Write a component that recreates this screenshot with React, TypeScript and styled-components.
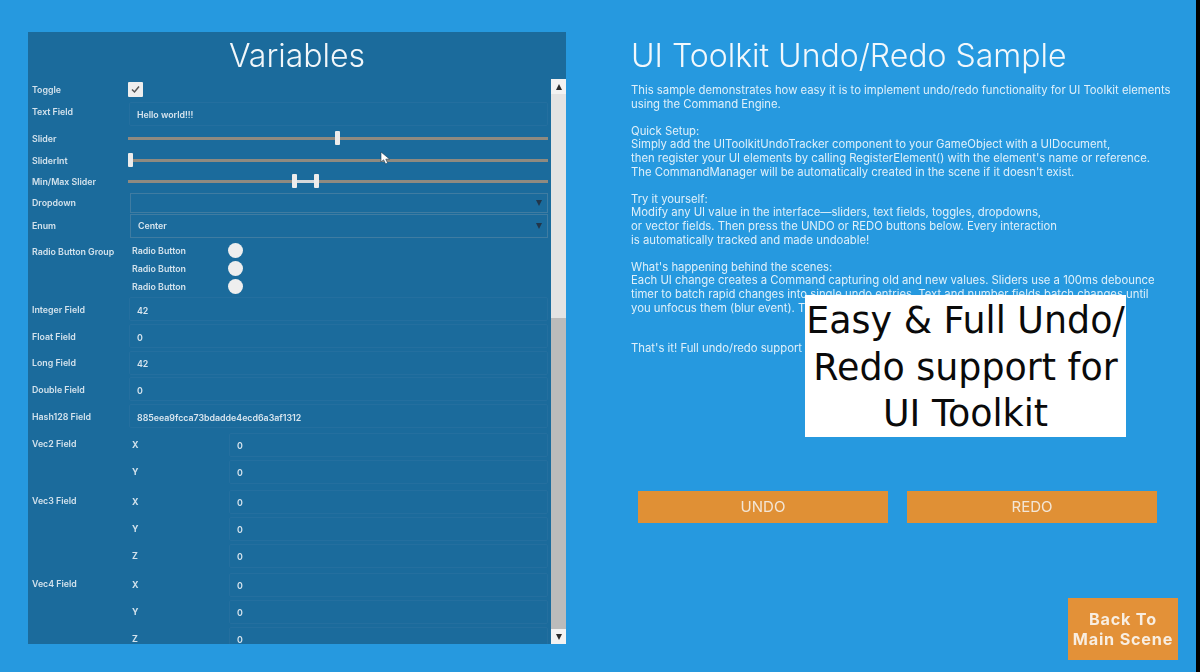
import * as React from 'react';
import styled, { createGlobalStyle } from 'styled-components';

const GlobalStyle = createGlobalStyle`
  html, body {
    margin: 0;
    padding: 0;
    background: #000;
  }
  body {
    font-family: Inter, "Liberation Sans", sans-serif;
    overflow: hidden;
  }
`;

const Screen = styled.div`
  position: relative;
  width: 1196px;
  height: 672px;
  background: #2699df;
  display: flex;
  overflow: hidden;
`;

const LeftPanel = styled.section`
  margin: 32px 0 28px 28px;
  width: 538px;
  background: #1b6b9c;
  display: flex;
  flex-direction: column;
  filter: blur(0.55px);
`;

const PanelTitle = styled.h1`
  margin: 0;
  height: 47px;
  line-height: 47px;
  text-align: center;
  font-size: 32px;
  font-weight: 300;
  color: #f2f7fa;
`;

const ScrollArea = styled.div`
  flex: 1;
  display: flex;
  min-height: 0;
`;

const Fields = styled.div`
  flex: 1;
  overflow: hidden;
  padding: 0 3px 0 4px;
`;

const Row = styled.div<{ $h: number; $top?: boolean }>`
  height: ${p => p.$h}px;
  display: flex;
  align-items: ${p => (p.$top ? 'flex-start' : 'center')};
`;

const Label = styled.div<{ $raise?: number }>`
  width: 96px;
  flex: none;
  margin-bottom: ${p => p.$raise || 0}px;
  font-size: 8.8px;
  font-weight: 600;
  color: #d3e2ec;
  white-space: nowrap;
`;

const RadioLabel = styled(Label)`
  padding-top: 8px;
`;

const Checkbox = styled.div`
  width: 15px;
  height: 15px;
  background: #eeeeee;
  border-radius: 1px;
  display: flex;
  align-items: center;
  justify-content: center;
`;

const InputBox = styled.div`
  flex: 1;
  height: 24px;
  margin-left: 1px;
  padding: 2px 6px 0 7px;
  display: flex;
  align-items: center;
  box-sizing: border-box;
  border: 1px solid #246f9f;
  border-radius: 2px;
  font-size: 8.8px;
  font-weight: 600;
  color: #d8e5ee;
  white-space: nowrap;
`;

const Track = styled.div`
  position: relative;
  flex: 1;
  height: 3px;
  background: #8f8a80;
`;

const Handle = styled.div<{ $left: number }>`
  position: absolute;
  left: ${p => p.$left}px;
  top: -6px;
  width: 5px;
  height: 14px;
  background: #ececec;
  border-radius: 1px;
`;

const RangeFill = styled.div<{ $left: number; $width: number }>`
  position: absolute;
  left: ${p => p.$left}px;
  width: ${p => p.$width}px;
  top: 0;
  height: 3px;
  background: #d5d8da;
`;

const Select = styled.div<{ $h: number }>`
  flex: 1;
  height: ${p => p.$h}px;
  margin-left: 2px;
  padding: 0 7px;
  box-sizing: border-box;
  border: 1px solid #3f7ca2;
  display: flex;
  align-items: center;
  justify-content: space-between;
  font-size: 8.8px;
  font-weight: 600;
  color: #d8e5ee;
`;

const Caret = styled.span`
  width: 0;
  height: 0;
  margin-right: -2px;
  border-left: 3px solid transparent;
  border-right: 3px solid transparent;
  border-top: 6px solid #22364a;
`;

const RadioGroup = styled.div`
  display: flex;
  flex-direction: column;
  margin-left: 4px;
  padding-top: 3px;
`;

const RadioRow = styled.div`
  height: 18px;
  display: flex;
  align-items: center;
  font-size: 8.8px;
  font-weight: 600;
  color: #d3e2ec;
`;

const RadioText = styled.span`
  width: 96px;
`;

const RadioDot = styled.span`
  width: 15px;
  height: 15px;
  border-radius: 50%;
  background: #eeeeee;
`;

const VecGroup = styled.div<{ $top: number }>`
  display: flex;
  margin-top: ${p => p.$top}px;
`;

const VecLabel = styled(Label)`
  padding-top: 7px;
  height: 12px;
`;

const VecRows = styled.div`
  flex: 1;
  display: flex;
  flex-direction: column;
`;

const VecRow = styled.div`
  height: 27px;
  display: flex;
  align-items: center;
  padding-left: 4px;
`;

const AxisName = styled.span`
  width: 96px;
  flex: none;
  font-size: 8.8px;
  font-weight: 700;
  color: #d3e2ec;
`;

const Scrollbar = styled.div`
  width: 15px;
  flex: none;
  display: flex;
  flex-direction: column;
  background: #bbbbbb;
`;

const ScrollButton = styled.div`
  height: 15px;
  flex: none;
  background: #f2f2f2;
  display: flex;
  align-items: center;
  justify-content: center;
`;

const ScrollThumb = styled.div`
  height: 224px;
  background: #e3e3e3;
`;

const ScrollRest = styled.div`
  flex: 1;
`;

const UpArrow = styled.span`
  width: 0;
  height: 0;
  border-left: 3px solid transparent;
  border-right: 3px solid transparent;
  border-bottom: 6px solid #2a2a2a;
`;

const DownArrow = styled.span`
  width: 0;
  height: 0;
  border-left: 3px solid transparent;
  border-right: 3px solid transparent;
  border-top: 6px solid #2a2a2a;
`;

const RightColumn = styled.section`
  flex: 1;
  padding: 32px 18px 12px 65px;
  display: flex;
  flex-direction: column;
  filter: blur(0.55px);
`;

const MainTitle = styled.h2`
  margin: 0;
  height: 47px;
  line-height: 47px;
  font-size: 32px;
  font-weight: 300;
  color: #f2f8fc;
  white-space: nowrap;
`;

const Description = styled.p`
  margin: 5px 0 0;
  font-size: 11.3px;
  line-height: 13.6px;
  font-weight: 400;
  color: #dff0fa;
  white-space: pre;
`;

const ButtonRow = styled.div`
  display: flex;
  gap: 19px;
  margin: 135px 0 0 7px;
`;

const ActionButton = styled.div`
  width: 250px;
  height: 32px;
  background: #e09035;
  color: #f3e6d6;
  font-size: 15px;
  display: flex;
  align-items: center;
  justify-content: center;
`;

const BackButton = styled.div`
  align-self: flex-end;
  margin-top: auto;
  width: 110px;
  height: 62px;
  background: #e39138;
  color: #f8eee2;
  font-size: 16.2px;
  line-height: 20px;
  font-weight: 700;
  letter-spacing: 0.8px;
  text-align: center;
  display: flex;
  align-items: center;
  justify-content: center;
`;

const CaptionCard = styled.div`
  position: absolute;
  left: 805px;
  top: 295px;
  width: 321px;
  height: 142px;
  padding-top: 3px;
  box-sizing: border-box;
  background: #fff;
  color: #0a0a0a;
  font-family: "DejaVu Sans", Verdana, sans-serif;
  font-size: 36.4px;
  line-height: 46.5px;
  text-align: center;
  white-space: nowrap;
`;

const Pointer = styled.svg`
  position: absolute;
  left: 380px;
  top: 151px;
  width: 11px;
  height: 14px;
`;

const description = `This sample demonstrates how easy it is to implement undo/redo functionality for UI Toolkit elements
using the Command Engine.

Quick Setup:
Simply add the UIToolkitUndoTracker component to your GameObject with a UIDocument,
then register your UI elements by calling RegisterElement() with the element's name or reference.
The CommandManager will be automatically created in the scene if it doesn't exist.

Try it yourself:
Modify any UI value in the interface—sliders, text fields, toggles, dropdowns,
or vector fields. Then press the UNDO or REDO buttons below. Every interaction
is automatically tracked and made undoable!

What's happening behind the scenes:
Each UI change creates a Command capturing old and new values. Sliders use a 100ms debounce
timer to batch rapid changes into single undo entries. Text and number fields batch changes until
you unfocus them (blur event). The


That's it! Full undo/redo support`;

const numberFields = [
  { label: 'Integer Field', value: '42' },
  { label: 'Float Field', value: '0' },
  { label: 'Long Field', value: '42' },
  { label: 'Double Field', value: '0' },
  { label: 'Hash128 Field', value: '885eea9fcca73bdadde4ecd6a3af1312' },
];

const vectors = [
  { label: 'Vec2 Field', axes: ['X', 'Y'], top: 2 },
  { label: 'Vec3 Field', axes: ['X', 'Y', 'Z'], top: 3 },
  { label: 'Vec4 Field', axes: ['X', 'Y', 'Z'], top: 2 },
];

export default function App() {
  return (
    <Screen>
      <GlobalStyle />
      <LeftPanel>
        <PanelTitle>Variables</PanelTitle>
        <ScrollArea>
          <Fields>
            <Row $h={21}>
              <Label>Toggle</Label>
              <Checkbox>
                <svg width="11" height="11" viewBox="0 0 11 11">
                  <path d="M2 5.5 L4.5 8 L9 2.5" fill="none" stroke="#555" strokeWidth="1.5" />
                </svg>
              </Checkbox>
            </Row>
            <Row $h={27}>
              <Label $raise={4}>Text Field</Label>
              <InputBox>Hello world!!!</InputBox>
            </Row>
            <Row $h={22}>
              <Label>Slider</Label>
              <Track><Handle $left={207} /></Track>
            </Row>
            <Row $h={22}>
              <Label>SliderInt</Label>
              <Track><Handle $left={0} /></Track>
            </Row>
            <Row $h={21}>
              <Label>Min/Max Slider</Label>
              <Track>
                <RangeFill $left={166} $width={22} />
                <Handle $left={164} />
                <Handle $left={186} />
              </Track>
            </Row>
            <Row $h={21}>
              <Label>Dropdown</Label>
              <Select $h={20}><span /><Caret /></Select>
            </Row>
            <Row $h={25}>
              <Label>Enum</Label>
              <Select $h={24}>Center<Caret /></Select>
            </Row>
            <Row $h={58} $top>
              <RadioLabel>Radio Button Group</RadioLabel>
              <RadioGroup>
                <RadioRow><RadioText>Radio Button</RadioText><RadioDot /></RadioRow>
                <RadioRow><RadioText>Radio Button</RadioText><RadioDot /></RadioRow>
                <RadioRow><RadioText>Radio Button</RadioText><RadioDot /></RadioRow>
              </RadioGroup>
            </Row>
            {numberFields.map(f => (
              <Row $h={26.7} key={f.label}>
                <Label>{f.label}</Label>
                <InputBox>{f.value}</InputBox>
              </Row>
            ))}
            {vectors.map(v => (
              <VecGroup $top={v.top} key={v.label}>
                <VecLabel>{v.label}</VecLabel>
                <VecRows>
                  {v.axes.map(a => (
                    <VecRow key={a}>
                      <AxisName>{a}</AxisName>
                      <InputBox>0</InputBox>
                    </VecRow>
                  ))}
                </VecRows>
              </VecGroup>
            ))}
          </Fields>
          <Scrollbar>
            <ScrollButton><UpArrow /></ScrollButton>
            <ScrollThumb />
            <ScrollRest />
            <ScrollButton><DownArrow /></ScrollButton>
          </Scrollbar>
        </ScrollArea>
      </LeftPanel>
      <RightColumn>
        <MainTitle>UI Toolkit Undo/Redo Sample</MainTitle>
        <Description>{description}</Description>
        <ButtonRow>
          <ActionButton>UNDO</ActionButton>
          <ActionButton>REDO</ActionButton>
        </ButtonRow>
        <BackButton>Back To<br />Main Scene</BackButton>
      </RightColumn>
      <CaptionCard>
        Easy &amp; Full Undo/<br />Redo support for<br />UI Toolkit
      </CaptionCard>
      <Pointer viewBox="0 0 11 14">
        <path d="M1 1 L1 11 L3.6 8.8 L5.6 13 L7.6 12 L5.8 8.2 L9.5 8 Z" fill="#fff" stroke="#1a3b52" strokeWidth="0.6" />
      </Pointer>
    </Screen>
  );
}
